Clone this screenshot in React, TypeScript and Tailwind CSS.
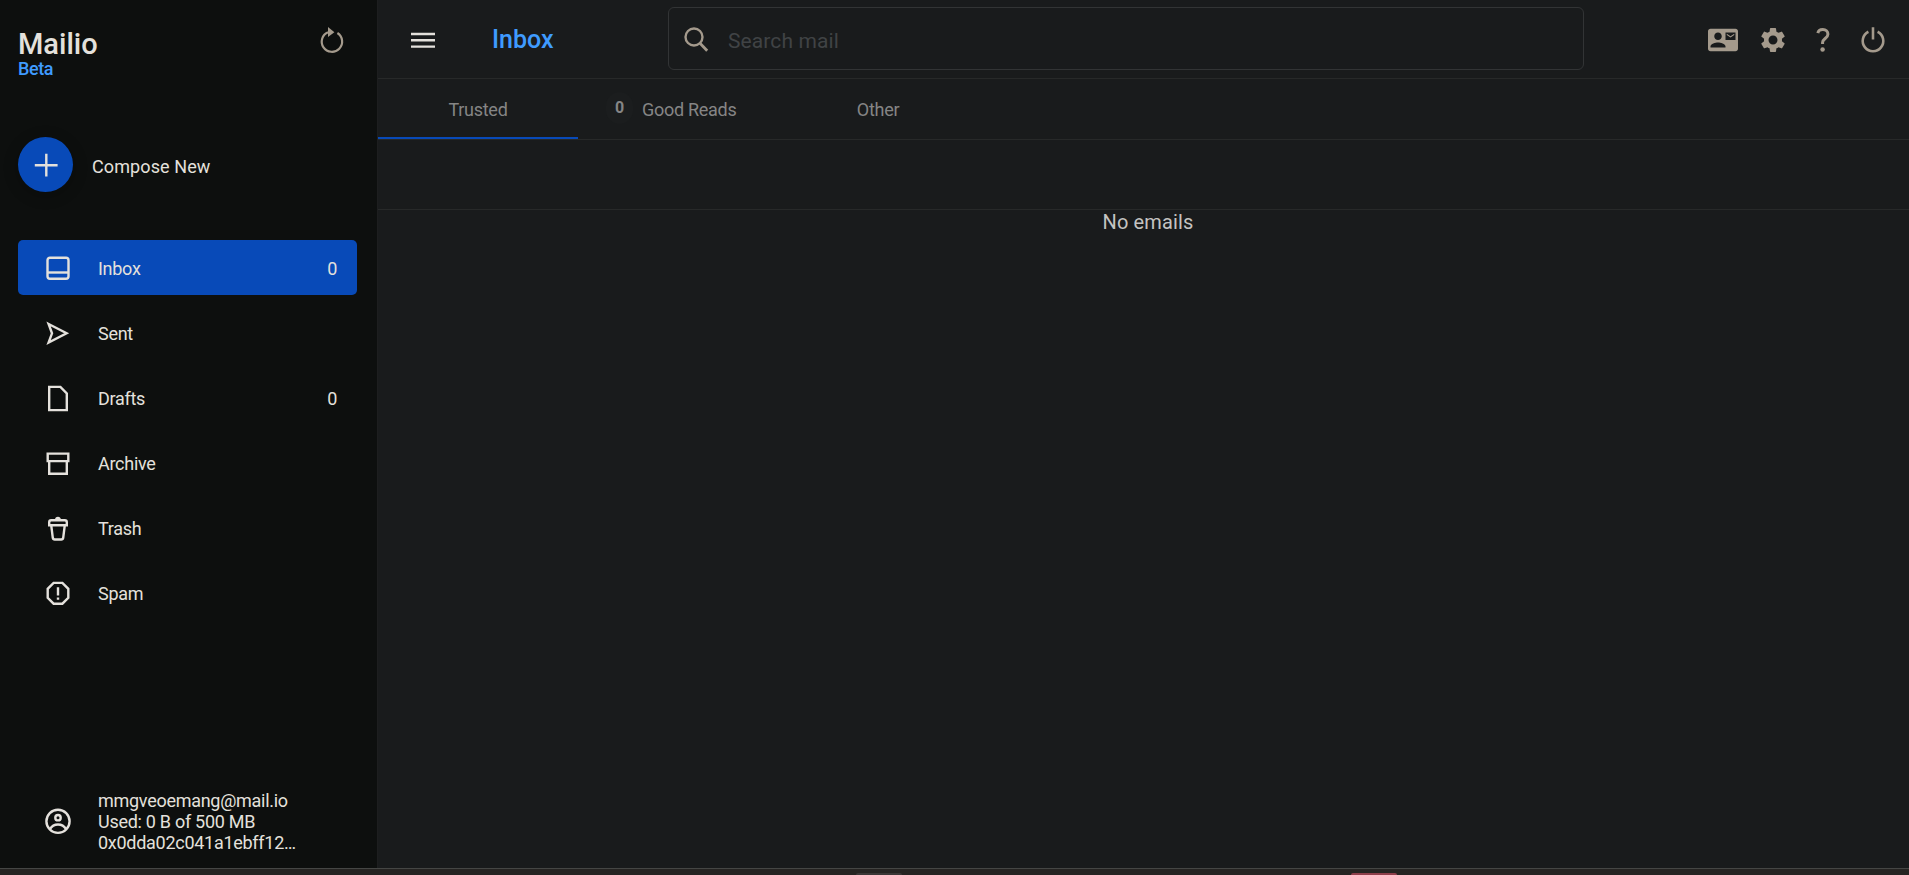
import React from 'react';
import { MdContactMail, MdSettings } from 'react-icons/md';

interface NavItem {
  label: string;
  icon: React.ReactNode;
  count?: number;
  active?: boolean;
}

interface IconProps {
  children: React.ReactNode;
  className?: string;
}

const Icon: React.FC<IconProps> = ({ children, className = 'size-7' }) => {
  return (
    <svg viewBox="0 0 28 28" fill="none" stroke="currentColor" strokeWidth="2.4" className={className}>
      {children}
    </svg>
  );
};

const navItems: NavItem[] = [
  {
    label: 'Inbox',
    count: 0,
    active: true,
    icon: (
      <Icon>
        <rect x="3.5" y="3.7" width="21" height="21" rx="2.5" />
        <path d="M3.5 18.5h21" />
      </Icon>
    ),
  },
  {
    label: 'Sent',
    icon: (
      <Icon>
        <path d="M4.6 5L22.6 14.3 4.6 23.6l3.4-9.3z" />
      </Icon>
    ),
  },
  {
    label: 'Drafts',
    count: 0,
    icon: (
      <Icon>
        <path d="M5.2 2.9h11.2l6.4 6.5v16.7H5.2z" />
      </Icon>
    ),
  },
  {
    label: 'Archive',
    icon: (
      <Icon>
        <path d="M3.7 4.6h20.6v7.5H3.7zM5.2 12.1h17.6v12.6H5.2z" />
      </Icon>
    ),
  },
  {
    label: 'Trash',
    icon: (
      <Icon>
        <path d="M5.2 11.2V8.2A2 2 0 0 1 7.2 6.2h13.6a2 2 0 0 1 2 2v3zM7.2 11.2l1.6 12.6a2 2 0 0 0 2 1.7h6.4a2 2 0 0 0 2-1.7l1.6-12.6" />
        <path d="M12.3 5.5a1.7 1.5 0 0 1 3.4 0" fill="currentColor" />
      </Icon>
    ),
  },
  {
    label: 'Spam',
    icon: (
      <Icon>
        <path d="M9.6 3.9h8.8l5.9 5.9v9l-5.9 5.9H9.6l-5.9-5.9v-9z" />
        <path d="M14 8.2v8.2M14 18.4v2.3" />
      </Icon>
    ),
  },
];

const Sidebar: React.FC = () => {
  return (
    <aside className="w-[378px] shrink-0 bg-[#0d0f0e] border-r border-[#1d1e1f] flex flex-col pl-[18px] pr-5 text-lg leading-[21px]">
      <div className="flex justify-between pt-[27px]">
        <div>
          <h1 className="text-[29px] leading-[33px] font-medium pt-px">Mailio</h1>
          <p className="text-[#3f9bff] font-medium -mt-[3px] tracking-[-0.4px]">Beta</p>
        </div>
        <button className="text-[#a49a8c] size-7 mr-[11px]">
          <Icon>
            <path d="M19.4 6A10.2 10.2 0 1 1 10 5.2" strokeWidth="2.2" />
            <path d="M10 0L16.4 5.2 10 10z" fill="currentColor" stroke="none" />
          </Icon>
        </button>
      </div>

      <button className="flex items-center mt-[58px] text-left">
        <span className="size-[55px] rounded-full bg-[#084ab8] flex items-center justify-center shadow-[0_3px_14px_2px_rgba(0,0,0,0.2)]">
          <Icon>
            <path d="M14.3 2.8v22.8M2.8 14.3h22.8" />
          </Icon>
        </span>
        <span className="ml-[19px] mt-1 tracking-[0.1px]">Compose New</span>
      </button>

      <nav className="mt-12 flex flex-col gap-2.5 tracking-[-0.28px]">
        {navItems.map((item) => (
          <a
            key={item.label}
            className={`h-[55px] flex items-center pl-[26px] pr-5 rounded-[5px] ${item.active ? 'bg-[#084ab8]' : ''}`}
          >
            {item.icon}
            <span className="ml-[26px] mt-px flex-1">{item.label}</span>
            {item.count !== undefined && <span className="mt-px">{item.count}</span>}
          </a>
        ))}
      </nav>

      <div className="mt-auto mb-[15px] pl-[26px] flex items-center">
        <Icon>
          <circle cx="14" cy="14.3" r="11.6" />
          <circle cx="14" cy="10.7" r="2.7" />
          <path d="M6 22.1c2-3.5 4.5-4.6 8-4.6s6 1.1 8 4.6" />
        </Icon>
        <div className="ml-[26px] mt-px tracking-[-0.28px]">
          <p>mmgveoemang@mail.io</p>
          <p>Used: 0 B of 500 MB</p>
          <p>0x0dda02c041a1ebff12…</p>
        </div>
      </div>
    </aside>
  );
};

const Header: React.FC = () => {
  return (
    <header className="h-[79px] pt-px border-b border-[#272929] flex items-center">
      <Icon className="size-7 ml-[31px]">
        <path d="M2 8h24M2 14.3h24M2 20.6h24" />
      </Icon>
      <h2 className="ml-[55px] w-44 text-[25px] font-medium text-[#3f9bff]">Inbox</h2>
      <div className="w-[916px] h-[63px] -mt-0.5 border border-[#323435] rounded-md flex items-center pl-3.5">
        <Icon className="size-7 mt-px text-[#a49a8c]">
          <circle cx="11" cy="12" r="8.5" />
          <path d="M17 18.3l7.2 7.5" strokeWidth="2.8" />
        </Icon>
        <span className="ml-[17px] mt-1.5 text-[21px] tracking-[0.1px] text-[#404345]">Search mail</span>
      </div>
      <div className="ml-auto mr-[21px] mt-px flex items-center gap-5 text-[#a49a8c]">
        <MdContactMail className="size-[30px]" />
        <MdSettings className="size-[30px]" />
        <Icon className="size-[30px]">
          <path d="M9.2 7.6c.4-2.2 2.3-3.3 4.6-3.3 2.9 0 4.8 1.7 4.8 4.3 0 3.700-5 4.200-5 7.700v1.400" strokeWidth="2.8" />
          <circle cx="13.6" cy="22.8" r="2.1" fill="currentColor" stroke="none" />
        </Icon>
        <Icon className="size-[30px]">
          <path d="M18.3 6.3a9.6 9.6 0 1 1-8.6 0M14 2v11.6" />
        </Icon>
      </div>
    </header>
  );
};

const Tabs: React.FC = () => {
  return (
    <div className="h-[61px] border-b border-[#272929] flex text-lg tracking-[-0.28px] text-[#858585]">
      <div className="w-[200px] pt-1 border-b-2 border-[#084ab8] flex items-center justify-center">Trusted</div>
      <div className="w-[200px] pt-0.5 flex items-center">
        <span className="ml-7 -mt-1 w-[27px] h-[32px] rounded-full bg-[#1b1d1e] flex items-center justify-center text-base font-bold">0</span>
        <span className="ml-[9px]">Good Reads</span>
      </div>
      <div className="w-[200px] pt-0.5 flex items-center justify-center">Other</div>
    </div>
  );
};

export default function App() {
  return (
    <div className="h-[875px] w-full overflow-hidden flex flex-col bg-[#191b1c] text-[#e4e1dc] font-['Roboto',sans-serif]">
      <div className="flex flex-1 min-h-0">
        <Sidebar />
        <main className="flex-1 min-w-0">
          <Header />
          <Tabs />
          <div className="h-[70px] border-b border-[#272929]" />
          <p className="pl-[9px] text-center text-xl leading-[25px] tracking-[0.15px] text-[#c4c3c1]">No emails</p>
        </main>
      </div>
      <footer className="h-[7px] border-t border-[#454644] bg-[#262422] flex items-end">
        <div className="ml-[856px] w-[46px] h-0.5 rounded-t-sm bg-[#3a3736]" />
        <div className="ml-[449px] w-[46px] h-0.5 rounded-t-sm bg-[#8f3f4b]" />
      </footer>
    </div>
  );
}
